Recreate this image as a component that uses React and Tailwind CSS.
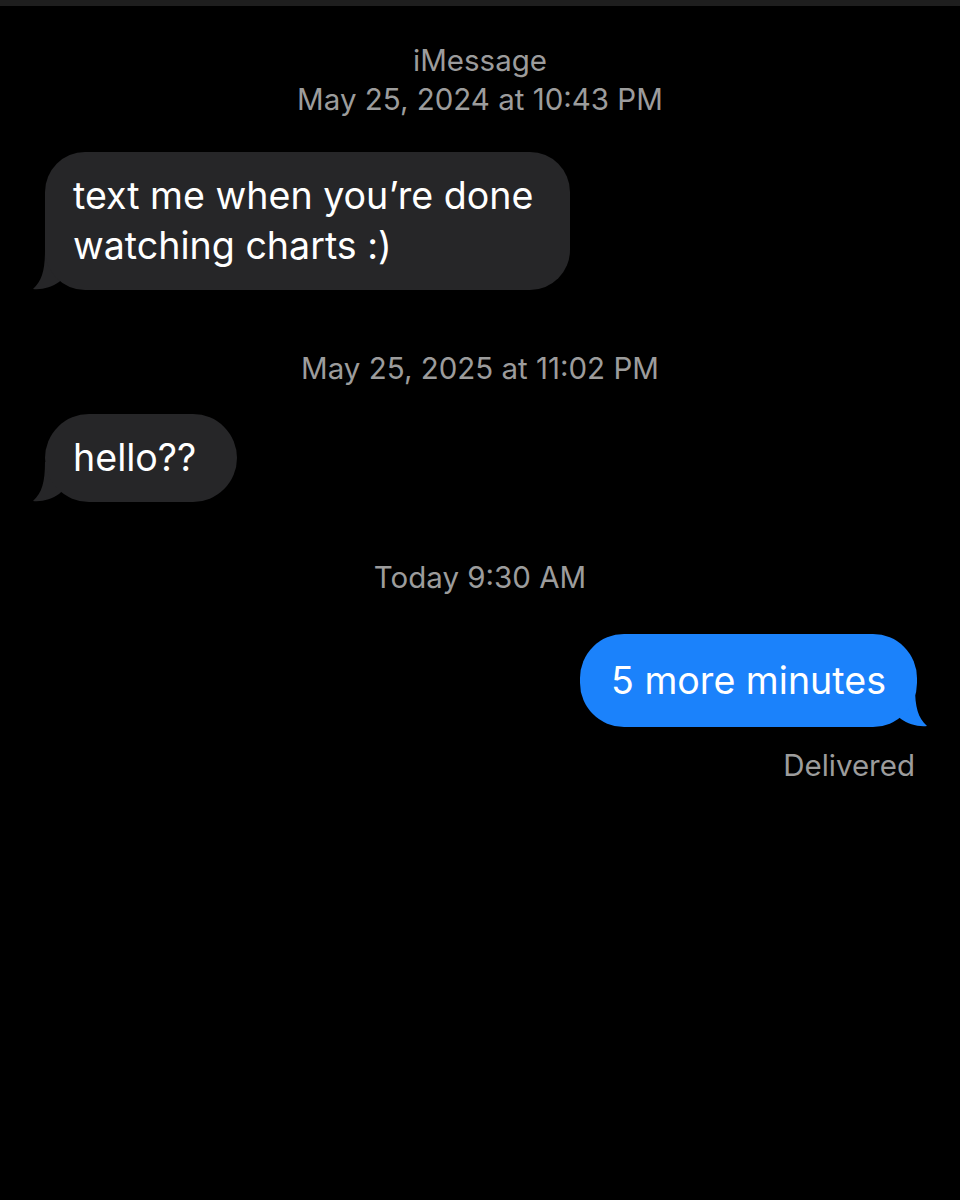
import React from "react";

const font = { fontFamily: "Inter, 'Noto Sans', sans-serif" };

function GrayTail() {
  return (
    <svg
      className="absolute left-[-13px] bottom-0"
      width="40"
      height="40"
      viewBox="0 0 40 40"
    >
      <path d="M13,0 C13,20 10,31 1,39 C10,40 20,37 27,32 L40,20 L40,0 Z" fill="#262628" />
    </svg>
  );
}

function BlueTail() {
  return (
    <svg
      className="absolute right-[-11px] bottom-0"
      width="40"
      height="40"
      viewBox="0 0 40 40"
    >
      <path d="M27,0 C27,20 30,31 39,39 C30,40 20,37 13,32 L0,20 L0,0 Z" fill="#1b82fb" />
    </svg>
  );
}

export default function App() {
  return (
    <div className="w-[960px] h-[1200px] bg-black flex flex-col" style={font}>
      <div className="h-[6px] bg-[#1e1e1e]" />
      <div className="flex flex-col items-center pt-[35px] text-[29.5px] leading-[39px] text-[#9c9c9c]">
        <div>iMessage</div>
        <div>May 25, 2024 at 10:43 PM</div>
      </div>

      <div className="mt-[33px] pl-[45px] flex">
        <div className="relative">
          <div className="relative z-10 bg-[#262628] rounded-[40px] w-[525px] h-[138px] pl-[28px] pt-[19px] text-white text-[37.6px] leading-[50px] whitespace-nowrap">
            text me when you’re done
            <br />
            watching charts :)
          </div>
          <GrayTail />
        </div>
      </div>

      <div className="mt-[59px] text-center text-[29.5px] leading-[39px] text-[#9c9c9c]">
        May 25, 2025 at 11:02 PM
      </div>

      <div className="mt-[26px] pl-[45px] flex">
        <div className="relative">
          <div className="relative z-10 bg-[#262628] rounded-[44px] w-[192px] h-[88px] pl-[28px] flex items-center text-white text-[37.6px] leading-[50px] whitespace-nowrap">
            hello??
          </div>
          <GrayTail />
        </div>
      </div>

      <div className="mt-[56px] text-center text-[29.5px] leading-[39px] text-[#9c9c9c]">
        Today 9:30 AM
      </div>

      <div className="mt-[37px] pr-[43px] flex justify-end">
        <div className="relative">
          <div className="relative z-10 bg-[#1b82fb] rounded-[44px] w-[337px] h-[93px] pl-[31px] flex items-center text-white text-[37.6px] leading-[50px] whitespace-nowrap">
            5 more minutes
          </div>
          <BlueTail />
        </div>
      </div>

      <div className="mt-[19px] pr-[45px] text-right text-[29.5px] leading-[39px] text-[#9c9c9c]">
        Delivered
      </div>
    </div>
  );
}
